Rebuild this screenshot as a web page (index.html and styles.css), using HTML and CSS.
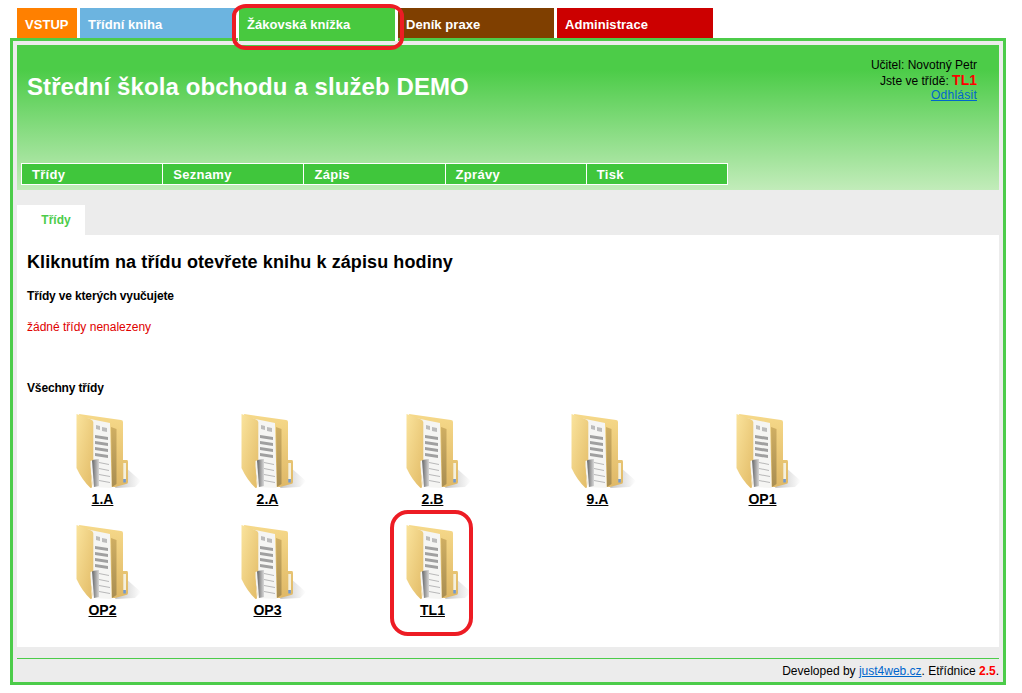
FILE: index.html
```html
<!DOCTYPE html>
<html lang="cs">
<head>
<meta charset="utf-8">
<title>Etřídnice</title>
<link rel="stylesheet" href="styles.css">
</head>
<body>
<svg class="defs" width="0" height="0" aria-hidden="true">
  <defs>
    <linearGradient id="back" x1="0" y1="0" x2="0" y2="1"><stop offset="0" stop-color="#f6d98a"/><stop offset="1" stop-color="#dfb866"/></linearGradient>
    <linearGradient id="front" x1="0" y1="0" x2="1" y2="1"><stop offset="0" stop-color="#fae39c"/><stop offset="1" stop-color="#e2bb66"/></linearGradient>
    <linearGradient id="inner" x1="0" y1="0" x2="0" y2="1"><stop offset="0" stop-color="#cfae62"/><stop offset="1" stop-color="#a98e52"/></linearGradient>
    <linearGradient id="shade" x1="0" y1="0" x2="1" y2="0"><stop offset="0" stop-color="#666"/><stop offset="1" stop-color="#d8d8d8"/></linearGradient>
    <linearGradient id="shadow" x1="0" y1="0" x2="1" y2="0"><stop offset="0" stop-color="#c4c4c4"/><stop offset="1" stop-color="#ffffff"/></linearGradient>
    <symbol id="folder" viewBox="0 0 68 76">
      <path d="M50 54 L66 68 L60 74 L40 75 Z" fill="url(#shadow)"/>
      <path d="M4 1 L46 7 Q48 7 48 9 L48 47 L52 47 Q53 47 53 49 L53 69 Q53 71 51 71 L40 74 L18 73 Z" fill="url(#back)"/>
      <path d="M36 14 L41.5 16 L41.5 71 L37 74 Z" fill="url(#inner)"/>
      <path d="M8 4.5 L35 10 L36.7 75 L18 74 Z" fill="#f5f5f3"/>
      <path d="M21 12 L25 13 L25 17 L21 16 Z M27 14 L32 15 L32 19 L27 18 Z" fill="#bcbcbc"/>
      <path d="M20 22 L33 24 L33 27 L20 25 Z M20 28 L33 30 L33 33 L20 31 Z M20 34 L33 36 L33 39 L20 37 Z M20 40 L33 42 L33 45 L20 43 Z" fill="#a0a0a0"/>
      <path d="M24 49 L34 51 L34 52 L24 50 Z M24 55 L34 57 L34 58 L24 56 Z M24 61 L35 63 L35 64 L24 62 Z M24 67 L35 69 L35 70 L24 68 Z" fill="#b8b8b8"/>
      <path d="M17 47 L24 46 L24 73 L19 74 Z" fill="url(#shade)"/>
      <path d="M1.5 1 L15 6 Q18 7 18.3 9 L18.3 47 L15.5 48 L15.5 54 L17 74.5 L15.5 75 Q7 67 1.5 55 Z" fill="url(#front)"/>
      <path d="M48.3 50 L51 50 L51 66 L48.3 66 Z" fill="#f4f0de"/>
      <rect x="48.3" y="66" width="2.5" height="3.5" fill="#6f9ad6"/>
    </symbol>
  </defs>
</svg>

<nav class="main-tabs">
  <a class="main-tab tab-orange" href="#">VSTUP</a>
  <a class="main-tab tab-blue" href="#">Třídní kniha</a>
  <a class="main-tab tab-green" href="#">Žákovská knížka</a>
  <a class="main-tab tab-brown" href="#">Deník praxe</a>
  <a class="main-tab tab-red" href="#">Administrace</a>
</nav>

<div class="frame">
  <header class="header">
    <div class="header-top">
      <h1 class="school">Střední škola obchodu a služeb DEMO</h1>
      <div class="user">
        <div>Učitel: Novotný Petr</div>
        <div>Jste ve třídě: <strong class="current">TL1</strong></div>
        <div><a class="link logout" href="#">Odhlásit</a></div>
      </div>
    </div>
    <ul class="menu">
      <li class="menu-item">Třídy</li>
      <li class="menu-item">Seznamy</li>
      <li class="menu-item">Zápis</li>
      <li class="menu-item">Zprávy</li>
      <li class="menu-item">Tisk</li>
    </ul>
  </header>

  <div class="subtabs"><a class="subtab" href="#">Třídy</a></div>

  <main class="content">
    <h2 class="title">Kliknutím na třídu otevřete knihu k zápisu hodiny</h2>
    <h3 class="section">Třídy ve kterých vyučujete</h3>
    <p class="empty">žádné třídy nenalezeny</p>
    <h3 class="section section-all">Všechny třídy</h3>
    <div class="classes">
      <a class="class-item" href="#"><svg class="folder"><use href="#folder"/></svg><span>1.A</span></a>
      <a class="class-item" href="#"><svg class="folder"><use href="#folder"/></svg><span>2.A</span></a>
      <a class="class-item" href="#"><svg class="folder"><use href="#folder"/></svg><span>2.B</span></a>
      <a class="class-item" href="#"><svg class="folder"><use href="#folder"/></svg><span>9.A</span></a>
      <a class="class-item" href="#"><svg class="folder"><use href="#folder"/></svg><span>OP1</span></a>
      <a class="class-item" href="#"><svg class="folder"><use href="#folder"/></svg><span>OP2</span></a>
      <a class="class-item" href="#"><svg class="folder"><use href="#folder"/></svg><span>OP3</span></a>
      <a class="class-item" href="#"><svg class="folder"><use href="#folder"/></svg><span>TL1</span></a>
    </div>
  </main>

  <footer class="footer">Developed by <a class="link" href="#">just4web.cz</a>. Etřídnice <strong class="version">2.5</strong>.</footer>
</div>

<div class="mark mark-tab"></div>
<div class="mark mark-class"></div>
</body>
</html>
```

FILE: styles.css
```css
* { box-sizing: border-box; }

html, body { margin: 0; padding: 0; }

body {
  position: relative;
  width: 1022px;
  height: 693px;
  overflow: hidden;
  background: #fff;
  font-family: "Liberation Sans", Arial, sans-serif;
  font-size: 12px;
  color: #000;
}

.defs { position: absolute; }

.main-tabs {
  display: flex;
  gap: 3px;
  height: 30px;
  margin: 8px 0 0 17px;
}

.main-tab {
  display: block;
  flex: none;
  width: 156px;
  height: 30px;
  padding: 9px 0 0 8px;
  font-size: 13px;
  line-height: 15px;
  font-weight: bold;
  letter-spacing: .05px;
  color: #fff;
  text-decoration: none;
}

.tab-orange { width: 60px; background: #ff8000; }
.tab-blue { background: #6cb4e0; }
.tab-green { position: relative; height: 33px; background: #48c93f; box-shadow: -1px 0 #fff, 3px 0 #fff; }
.tab-brown { background: #7f3f00; }
.tab-red { background: #cc0000; }

.frame {
  width: 996px;
  height: 647px;
  margin-left: 10px;
  padding: 4px;
  border: 3px solid #4ccc4a;
  background: #ececec;
}

.header {
  height: 145px;
  margin-bottom: 15px;
  padding: 0 4px;
  background: linear-gradient(to bottom, #4ccc48 0, #4ccc48 25px, #c2ecba 145px);
}

.header-top {
  display: flex;
  justify-content: space-between;
  height: 118px;
  padding: 13px 18px 0 6px;
}

.school {
  margin: 14px 0 0;
  font-size: 24px;
  line-height: 30px;
  font-weight: bold;
  letter-spacing: .09px;
  color: #fff;
}

.user { display: grid; justify-items: end; align-content: start; line-height: 15px; }
.current { font-size: 14px; color: #ff0000; }
.link { color: #0066cc; text-decoration: underline; }
.logout { display: block; margin-top: -1px; letter-spacing: .25px; }

.menu {
  display: flex;
  width: 706px;
  margin: 0;
  padding: 0;
  list-style: none;
}

.menu-item {
  flex: 1;
  height: 22px;
  margin-right: -1px;
  padding: 3px 0 0 10px;
  border: 1px solid #fff;
  background: #40c63c;
  font-size: 13px;
  line-height: 15px;
  font-weight: bold;
  letter-spacing: .3px;
  color: #fff;
}

.subtabs { display: flex; height: 30px; }

.subtab {
  width: 68px;
  padding: 8px 0 0 10px;
  background: #fff;
  color: #4ccc4a;
  font-weight: bold;
  line-height: 14px;
  text-align: center;
  text-decoration: none;
}

.content {
  height: 412px;
  padding: 15px 10px 0;
  background: #fff;
}

.title {
  margin: 0;
  font-size: 18px;
  line-height: 24px;
  font-weight: bold;
  letter-spacing: .1px;
}

.section {
  margin: 15px 0 0;
  font-size: 12px;
  line-height: 14px;
  font-weight: bold;
  letter-spacing: -.15px;
}

.section-all { margin-top: 47px; }

.empty {
  margin: 17px 0 0;
  line-height: 14px;
  color: #e00000;
}

.classes {
  display: grid;
  grid-template-columns: repeat(5, 165px);
  grid-auto-rows: 111px;
  margin: 18px 0 0 -7px;
}

.class-item {
  display: flex;
  flex-direction: column;
  align-items: center;
  height: 111px;
  color: #000;
  font-size: 14px;
  line-height: 16px;
  font-weight: bold;
  text-decoration: underline;
}

.folder { display: block; flex: none; width: 68px; height: 76px; margin: 0 0 2px 12px; }

.footer {
  height: 27px;
  margin-top: 11px;
  padding-top: 5px;
  border-top: 1px solid #4ccc4a;
  line-height: 14px;
  text-align: right;
}

.version { color: #ff0000; }

.mark {
  position: absolute;
  border: 4px solid #ed1c24;
}

.mark-tab { left: 232px; top: 4px; width: 172px; height: 46px; border-radius: 14px / 12px; }
.mark-class { left: 390px; top: 510px; width: 83px; height: 126px; border-radius: 18px; }
```
